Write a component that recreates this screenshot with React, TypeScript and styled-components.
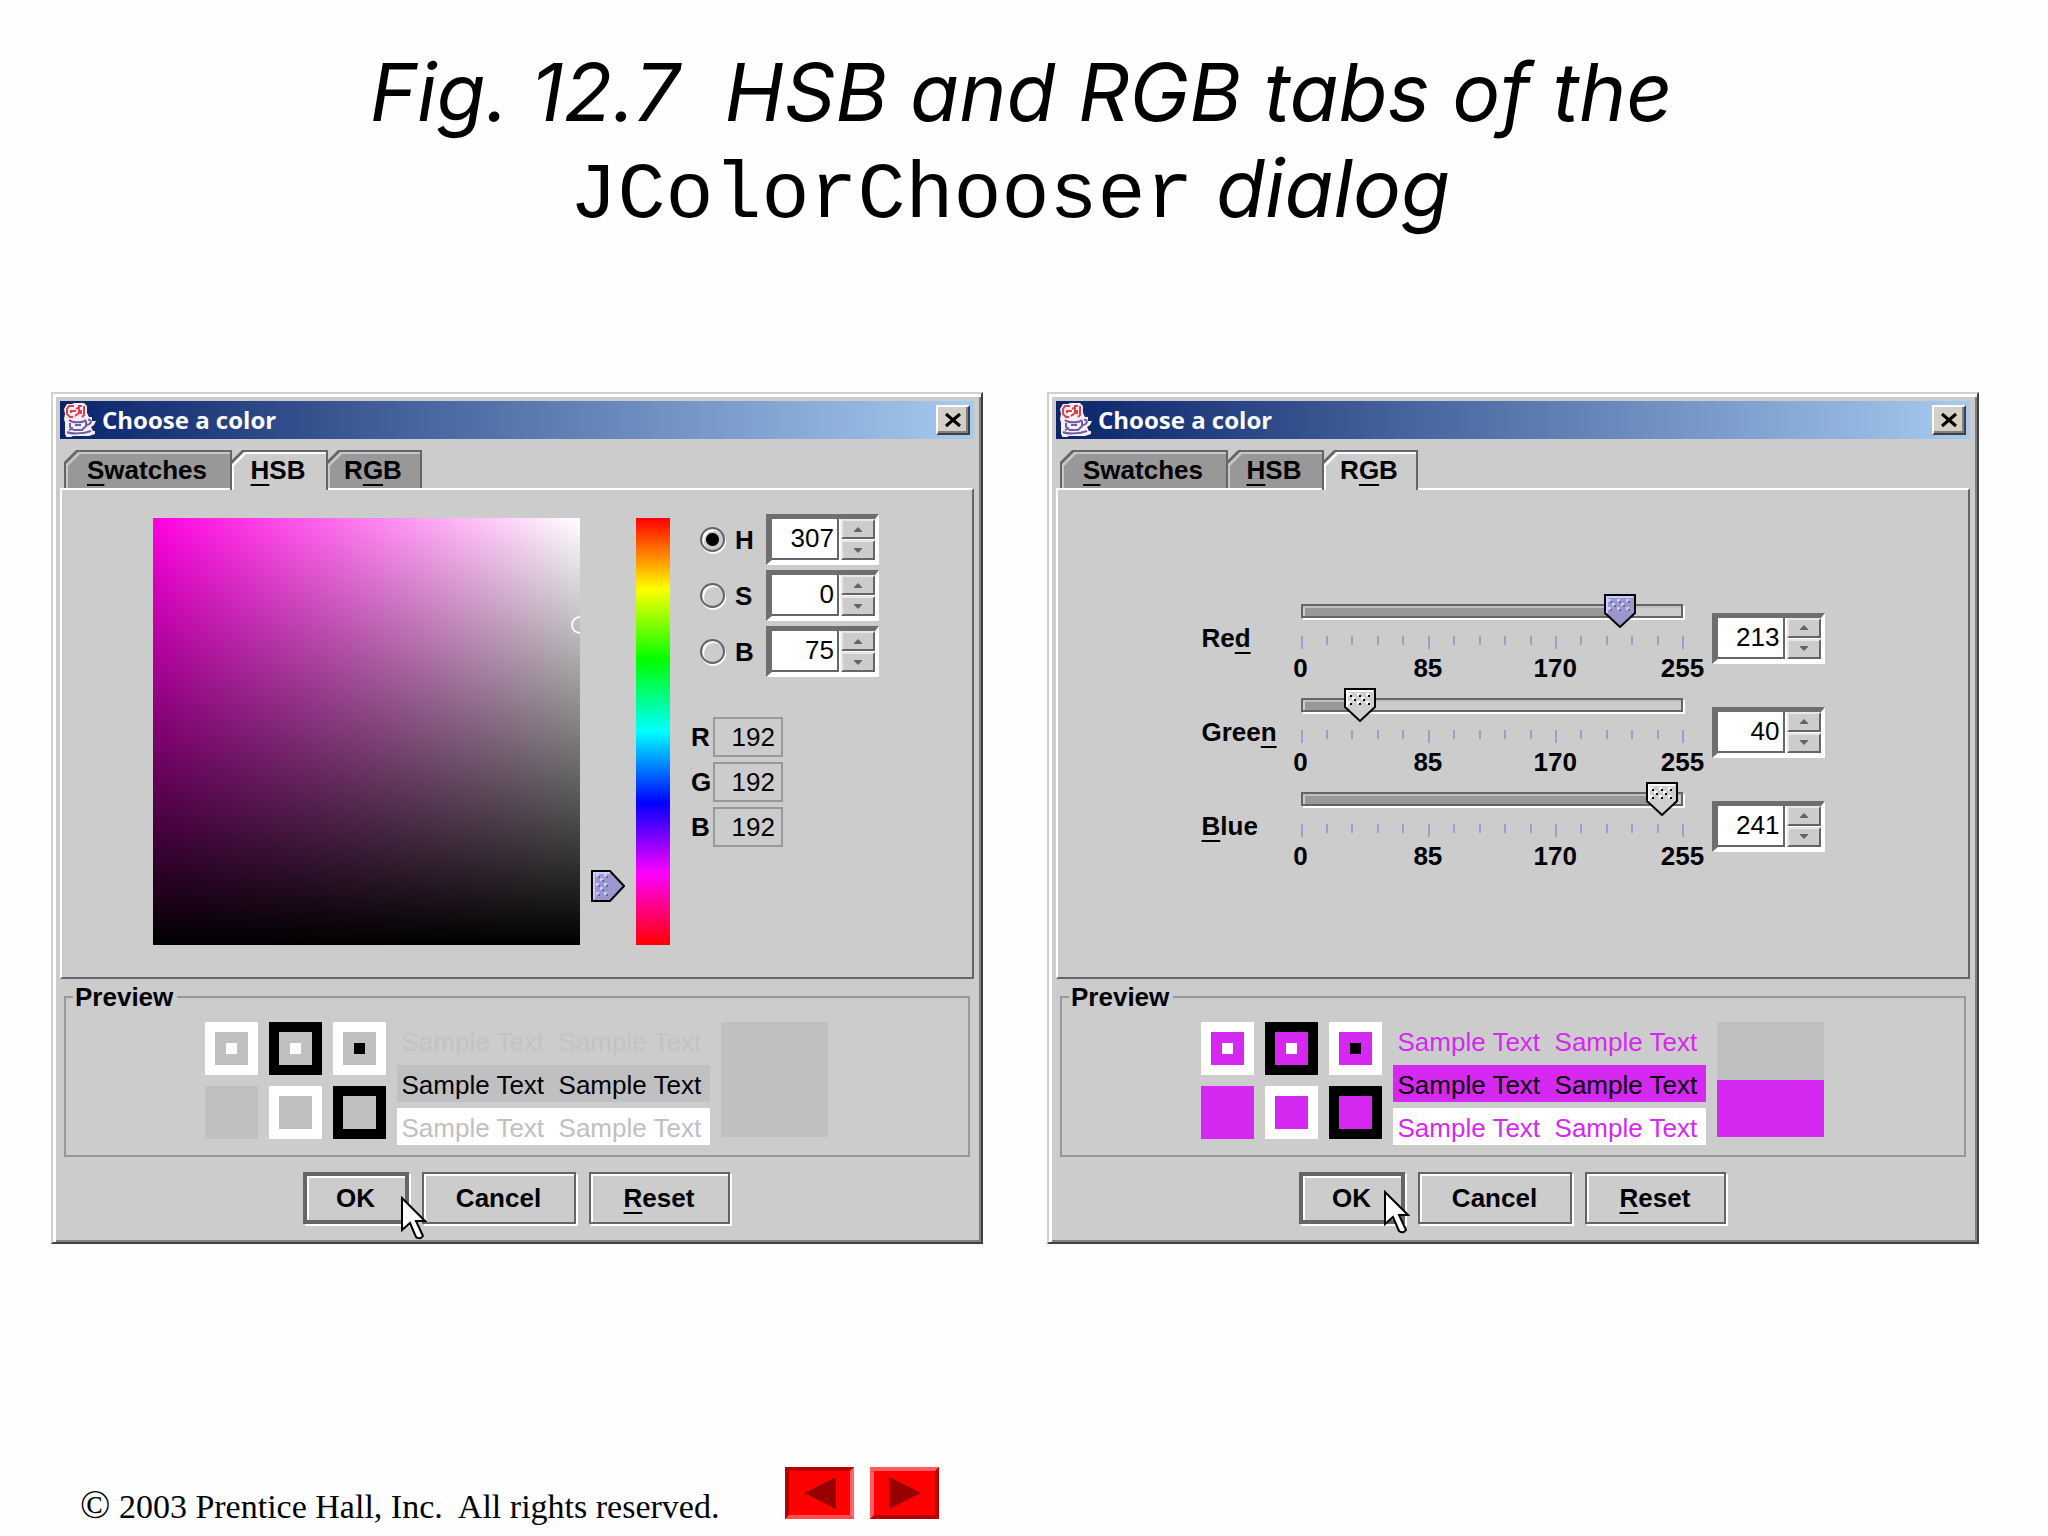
import React, { useState } from 'react';
import styled, { createGlobalStyle } from 'styled-components';

const FACE = '#cdcccd';
const SHADOW = '#666468';
const MID = '#999899';
const SANS = '"Liberation Sans", Arial, sans-serif';

const GlobalStyle = createGlobalStyle`
  *, *::before, *::after { box-sizing: border-box; }
  body { margin: 0; background: #fefefe; color: #000; font-family: ${SANS}; }
  button, input { font: inherit; color: inherit; margin: 0; padding: 0; border-radius: 0; }
`;

const Slide = styled.main`
  display: flex;
  flex-direction: column;
  min-height: 100vh;
  padding-top: 44px;
`;

const Heading = styled.h1`
  margin: 0 0 156px;
  padding-right: 6px;
  text-align: center;
  white-space: pre-line;
  font: italic 400 80px/96px Inter, "Open Sans", sans-serif;
  font-feature-settings: "cv11";
`;

const CodeName = styled.code`
  font: normal 400 80px/1 "Liberation Mono", "Courier New", monospace;
  line-height: 0;
`;

const Dialogs = styled.div`
  display: grid;
  grid-template-columns: 1fr 1fr;
  gap: 64px;
  padding: 0 69px 0 51px;
`;

const Dialog = styled.section`
  display: flex;
  flex-direction: column;
  padding: 7px 7px 16px;
  border: 2px solid;
  border-color: #d4d0c8 #404040 #404040 #d4d0c8;
  background: ${FACE};
  box-shadow: inset 3px 3px #fff, inset -2px -2px #808080;
  font-size: 26px;
  line-height: 30px;
`;

const TitleBar = styled.header`
  display: flex;
  align-items: center;
  gap: 6px;
  height: 38px;
  margin-bottom: 11px;
  padding: 0 4px;
  background: linear-gradient(90deg, #0a246a, #a6caf0);
`;

const TitleText = styled.h2`
  flex: 1;
  margin: 0;
  color: #fff;
  font: 700 24px/30px "Open Sans", "Noto Sans", sans-serif;
`;

const CloseButton = styled.button`
  display: grid;
  place-items: center;
  width: 34px;
  height: 30px;
  border: 2px solid;
  border-color: #fff #404040 #404040 #fff;
  background: #d4d0c8;
  box-shadow: inset -2px -2px #808080;
`;

const TabList = styled.div`
  display: flex;
  padding-left: 4px;
`;

const Tab = styled.button<{ $width: number; $active: boolean }>`
  --slope: polygon(0 12px, 12px 0, 100% 0, 100% 100%, 0 100%);
  position: relative;
  z-index: ${p => (p.$active ? 2 : 0)};
  isolation: isolate;
  width: ${p => p.$width}px;
  height: ${p => (p.$active ? 40 : 38)}px;
  margin-bottom: ${p => (p.$active ? -2 : 0)}px;
  padding: ${p => (p.$active ? '2px 2px 2px 0' : '2px 2px 0 0')};
  border: 0;
  background: ${SHADOW};
  clip-path: var(--slope);
  font-weight: 700;

  & + & { margin-left: -2px; }

  &::before, &::after {
    content: '';
    position: absolute;
    z-index: -1;
    inset: 2px 2px 0 2px;
    background: ${p => (p.$active ? '#fff' : '#c8c7c8')};
    clip-path: var(--slope);
  }
  &::after {
    inset: 4px 2px 0 4px;
    background: ${p => (p.$active ? FACE : MID)};
  }
`;

const Mnemonic = styled.span`
  text-decoration: underline 2px;
  text-underline-offset: 5px;
  text-decoration-skip-ink: none;
`;

const TabPanel = styled.div`
  display: flex;
  flex: 1;
  justify-content: center;
  align-items: center;
  padding: 24px 2px 27px 0;
  border: 2px solid;
  border-color: #fff ${SHADOW} ${SHADOW} #fff;
`;

const HsbLayout = styled.div`
  display: flex;
  align-items: flex-start;
`;

const ColorField = styled.div`
  position: relative;
  overflow: hidden;
  width: 427px;
  height: 427px;
  margin: 4px 11px 0 0;
  background:
    linear-gradient(to bottom, transparent, #000),
    linear-gradient(to right, #ff00e1, #fff);
`;

const FieldMarker = styled.svg`
  position: absolute;
  right: -9px;
  top: 98px;
`;

const HueSlider = styled.div`
  position: relative;
  width: 34px;
  height: 432px;
  margin: 4px 11px 0 0;
`;

const HueStrip = styled.div`
  width: 34px;
  height: 427px;
  margin: 4px 21px 0 0;
  background: linear-gradient(to bottom, #f00, #ff0, #0f0, #0ff, #00f, #f0f, #f00);
`;

const VerticalRange = styled.input`
  position: absolute;
  inset: -16px 0;
  width: 34px;
  height: 464px;
  appearance: none;
  background: transparent;
  writing-mode: vertical-lr;
  &::-webkit-slider-thumb { appearance: none; width: 34px; height: 32px; background: transparent; }
`;

const VerticalThumb = styled.svg`
  position: absolute;
  left: 0;
  transform: translateY(-50%);
  pointer-events: none;
`;

const Controls = styled.div`
  display: flex;
  flex-direction: column;
  gap: 40px;
`;

const RadioRows = styled.div`
  display: grid;
  gap: 5px;
  padding-left: 9px;
`;

const RadioRow = styled.div`
  display: grid;
  grid-template-columns: 25px 21px auto;
  align-items: center;
  column-gap: 10px;
  font-weight: 700;
`;

const Radio = styled.input`
  appearance: none;
  width: 25px;
  height: 25px;
  border: 2px solid ${SHADOW};
  border-radius: 50%;
  box-shadow: 1px 2px #fff, inset 2px 2px #fff;
  &:checked { background: radial-gradient(circle, #000 6px, transparent 7px); }
`;

const SpinnerBox = styled.div`
  display: grid;
  grid-template-columns: 67px 34px;
  column-gap: 2px;
  width: 113px;
  height: 51px;
  border: solid;
  border-width: 5px 4px 5px 6px;
  border-color: #6f6d70 #fff #fff #6f6d70;
  background: #fff;
`;

const SpinnerField = styled.input`
  width: 67px;
  height: 41px;
  padding-right: 3px;
  border: 0 solid ${SHADOW};
  border-width: 0 2px 2px 0;
  background: #fff;
  text-align: right;
  font-weight: 400;
`;

const Steps = styled.div`
  display: grid;
  grid-template-rows: 20px 20px;
  row-gap: 1px;
`;

const StepButton = styled.button`
  display: grid;
  place-items: center;
  border: 2px solid;
  border-color: #e8e7e8 ${SHADOW} ${SHADOW} #e8e7e8;
  background: ${FACE};
`;

const Readouts = styled.div`
  display: grid;
  grid-template-columns: 22px 70px;
  row-gap: 5px;
  align-items: center;
  font-weight: 700;
`;

const ReadoutField = styled.input`
  width: 70px;
  height: 40px;
  padding-right: 6px;
  border: 2px solid ${MID};
  background: transparent;
  text-align: right;
  font-weight: 400;
`;

const RgbLayout = styled.div`
  display: grid;
  gap: 5px;
  padding-left: 2px;
`;

const ChannelRow = styled.div`
  display: grid;
  grid-template-columns: 99px 382px 142px;
  align-items: center;
  font-weight: 700;
  & > :last-child { justify-self: end; }
`;

const ChannelSlider = styled.div`
  position: relative;
`;

const Groove = styled.div`
  height: 14px;
  margin: 10px 0 18px;
  padding: 2px;
  border: 2px solid ${SHADOW};
  box-shadow: 2px 2px #fff, inset 0 2px #bfbec0;
`;

const GrooveFill = styled.div`
  height: 8px;
  background: ${MID};
`;

const HorizontalRange = styled.input`
  position: absolute;
  top: 0;
  left: -16px;
  width: calc(100% + 32px);
  height: 34px;
  appearance: none;
  background: transparent;
  &::-webkit-slider-thumb { appearance: none; width: 32px; height: 34px; background: transparent; }
`;

const HorizontalThumb = styled.svg`
  position: absolute;
  top: 0;
  transform: translateX(-50%);
  pointer-events: none;
`;

const Ticks = styled.div`
  display: flex;
  justify-content: space-between;
  height: 13px;
  margin: 0 -2px 4px 0;
`;

const Tick = styled.i<{ $major: boolean }>`
  width: 2px;
  height: ${p => (p.$major ? 13 : 9)}px;
  background: #a19ccb;
`;

const ScaleLabels = styled.div`
  display: flex;
  justify-content: space-between;
  & > span { display: flex; justify-content: center; width: 0; }
`;

const PreviewBox = styled.fieldset`
  display: block;
  min-width: 0;
  margin: 3px 4px 15px;
  padding: 10px 2px 10px 0;
  border: 2px solid ${MID};
`;

const PreviewLegend = styled.legend`
  margin-left: 7px;
  padding: 0 4px 0 2px;
  font-weight: 700;
`;

const PreviewContent = styled.div`
  display: flex;
  justify-content: center;
  align-items: flex-start;
  gap: 11px;
`;

const Squares = styled.div`
  display: grid;
  grid-template-columns: repeat(3, 53px);
  gap: 11px;
`;

const Square = styled.div<{ $outer: string }>`
  height: 53px;
  padding: 10px;
  background: ${p => p.$outer};
`;

const SquareCore = styled.div<{ $color: string }>`
  height: 33px;
  padding: 11px;
  background: ${p => p.$color};
`;

const SquareDot = styled.div<{ $color: string }>`
  height: 11px;
  background: ${p => p.$color};
`;

const Samples = styled.div`
  display: grid;
  gap: 6px;
`;

const Sample = styled.p<{ $ink: string; $paper: string }>`
  width: 313px;
  height: 37px;
  margin: 0;
  padding-left: 5px;
  background: ${p => p.$paper};
  color: ${p => p.$ink};
  line-height: 40px;
  white-space: pre;
`;

const Comparison = styled.div<{ $current: string }>`
  width: 107px;
  height: 115px;
  background: linear-gradient(#c0bfc1 50%, ${p => p.$current} 50%);
`;

const ButtonBar = styled.footer`
  display: flex;
  justify-content: center;
  gap: 13px;
  padding: 0 2px 2px 0;
`;

const PushButton = styled.button<{ $width: number; $primary?: boolean }>`
  position: relative;
  z-index: ${p => (p.$primary ? 1 : 0)};
  width: ${p => p.$width}px;
  height: 52px;
  border: ${p => (p.$primary ? 4 : 2)}px solid ${SHADOW};
  background: ${FACE};
  box-shadow: 2px 2px #fff, inset 2px 2px #fff;
  font-weight: 700;
`;

const Pointer = styled.svg<{ $left: number; $top: number }>`
  position: absolute;
  z-index: 3;
  left: ${p => p.$left}px;
  top: ${p => p.$top}px;
`;

const SlideFooter = styled.footer`
  display: flex;
  align-items: flex-end;
  gap: 66px;
  margin-top: auto;
  padding: 0 80px 17px;
`;

const Copyright = styled.p`
  margin: 0;
  margin-bottom: -7px;
  white-space: pre;
  font: 34px/38px "Liberation Serif", "Times New Roman", serif;
`;

const CopyrightSign = styled.span`
  font-size: 40px;
  line-height: 0;
`;

const NavButtons = styled.nav`
  display: flex;
  gap: 16px;
`;

const NavButton = styled.button<{ $pressed?: boolean }>`
  display: grid;
  place-items: center;
  width: 69px;
  height: 52px;
  border: 4px solid;
  border-color: ${p => (p.$pressed ? '#b80000 #ff6666 #ff4d4d #b80000' : '#ff5c5c #b80000 #b80000 #ff5c5c')};
  background: #fe0000;
`;

function JavaIcon() {
  return (
    <svg width="32" height="34" viewBox="0 0 32 34" aria-hidden="true">
      <path d="M3 1h5l2-1h10l3 3v7l2 4h3v4h4l-2 4-3 2 2 4h2v3l-6 2H9l-4 2H3l-2-4V20l-1-4 1-5-1-5z" fill="#f8eef8" />
      <g fill="none" stroke="#e2404c" strokeWidth="2">
        <path d="M10 3H5L3 6v5l3 3h3M12 8H7v2M14 3h4M12 6l3-2v6l-4 3M20 3v9l-2 2M17 7v4" />
      </g>
      <g fill="none" stroke="#6a5eaa" strokeWidth="2">
        <path d="M5 17c3 3 14 3 17 0M6 20v4l4 3h8l4-4v-5M24 17c4-1 4 4-1 5M11 22h6M3 29c4 2 16 2 24-1M9 25l-4 2" />
      </g>
    </svg>
  );
}

const DOTS = [[6, 7], [15, 7], [24, 7], [10, 11], [19, 11], [6, 15], [15, 15], [24, 15]];

function ThumbShape({ active }: { active: boolean }) {
  return (
    <>
      <path d="M1 1h30v18L16 33 1 19z" fill={active ? '#9a98cc' : '#cfced0'} stroke="#000" strokeWidth="2" />
      <path d="M3 19V3h26" fill="none" stroke={active ? '#ccccff' : '#fff'} strokeWidth="2" />
      {DOTS.map(([x, y]) => (
        <g key={`${x}-${y}`}>
          <rect x={x - 2} y={y - 2} width="3" height="3" fill={active ? '#ccccff' : '#fff'} />
          <rect x={x} y={y} width="2" height="2" fill={active ? '#6866a8' : '#000'} />
        </g>
      ))}
    </>
  );
}

function Spinner({ id, label, value, max, onChange }: {
  id: string; label: string; value: number; max: number; onChange: (value: number) => void;
}) {
  const set = (next: number) => onChange(Math.max(0, Math.min(max, next || 0)));
  return (
    <SpinnerBox>
      <SpinnerField id={id} type="text" inputMode="numeric" aria-label={label} value={value}
        onChange={e => set(Number(e.target.value))} />
      <Steps>
        <StepButton type="button" aria-label={`Increase ${label}`} onClick={() => set(value + 1)}>
          <svg width="8" height="5" viewBox="0 0 8 5"><path d="M4 0l4 4v1H0V4z" fill={SHADOW} /></svg>
        </StepButton>
        <StepButton type="button" aria-label={`Decrease ${label}`} onClick={() => set(value - 1)}>
          <svg width="8" height="5" viewBox="0 0 8 5"><path d="M4 5L0 1V0h8v1z" fill={SHADOW} /></svg>
        </StepButton>
      </Steps>
    </SpinnerBox>
  );
}

function HsbPanel() {
  const [mode, setMode] = useState('H');
  const [values, setValues] = useState<Record<string, number>>({ H: 307, S: 0, B: 75 });
  const update = (key: string, value: number) => setValues(v => ({ ...v, [key]: value }));
  return (
    <HsbLayout>
      <ColorField>
        <FieldMarker width="18" height="18" viewBox="0 0 18 18" aria-hidden="true">
          <circle cx="9" cy="9" r="8" fill="none" stroke="#fff" strokeWidth="2" />
        </FieldMarker>
      </ColorField>
      <HueSlider>
        <VerticalRange type="range" aria-label="Hue" min="0" max="360" value={values.H}
          onChange={e => update('H', Number(e.target.value))} />
        <VerticalThumb width="34" height="32" viewBox="0 0 34 32" style={{ top: `${(values.H / 360) * 100}%` }} aria-hidden="true">
          <g transform="matrix(0 1 1 0 0 0)"><ThumbShape active /></g>
        </VerticalThumb>
      </HueSlider>
      <HueStrip />
      <Controls>
        <RadioRows>
          {['H', 'S', 'B'].map(key => (
            <RadioRow key={key}>
              <Radio type="radio" name="component" id={`mode-${key}`} checked={mode === key} onChange={() => setMode(key)} />
              <label htmlFor={`mode-${key}`}>{key}</label>
              <Spinner id={`hsb-${key}`} label={key} value={values[key]} max={key === 'H' ? 360 : 100}
                onChange={v => update(key, v)} />
            </RadioRow>
          ))}
        </RadioRows>
        <Readouts>
          {['R', 'G', 'B'].map(key => (
            <React.Fragment key={key}>
              <label htmlFor={`readout-${key}`}>{key}</label>
              <ReadoutField id={`readout-${key}`} type="text" readOnly value="192" />
            </React.Fragment>
          ))}
        </Readouts>
      </Controls>
    </HsbLayout>
  );
}

const CHANNELS = [
  { name: 'Red', mnemonic: 2, initial: 213 },
  { name: 'Green', mnemonic: 4, initial: 40 },
  { name: 'Blue', mnemonic: 0, initial: 241 },
];

function Marked({ text, at }: { text: string; at: number }) {
  return <>{text.slice(0, at)}<Mnemonic>{text[at]}</Mnemonic>{text.slice(at + 1)}</>;
}

function Channel({ name, mnemonic, initial }: { name: string; mnemonic: number; initial: number }) {
  const [value, setValue] = useState(initial);
  const percent = `${(value / 255) * 100}%`;
  return (
    <ChannelRow>
      <label htmlFor={`range-${name}`}><Marked text={name} at={mnemonic} /></label>
      <ChannelSlider>
        <Groove><GrooveFill style={{ width: percent }} /></Groove>
        <HorizontalRange id={`range-${name}`} type="range" min="0" max="255" value={value}
          onChange={e => setValue(Number(e.target.value))} />
        <HorizontalThumb width="32" height="34" viewBox="0 0 32 34" style={{ left: percent }} aria-hidden="true">
          <ThumbShape active={name === 'Red'} />
        </HorizontalThumb>
        <Ticks>
          {Array.from({ length: 16 }, (_, i) => <Tick key={i} $major={i % 5 === 0} />)}
        </Ticks>
        <ScaleLabels>
          {[0, 85, 170, 255].map(n => <span key={n}>{n}</span>)}
        </ScaleLabels>
      </ChannelSlider>
      <Spinner id={`rgb-${name}`} label={name} value={value} max={255} onChange={setValue} />
    </ChannelRow>
  );
}

const SAMPLE_TEXT = 'Sample Text  Sample Text';

function Preview({ color, faint }: { color: string; faint: string }) {
  return (
    <PreviewBox>
      <PreviewLegend>Preview</PreviewLegend>
      <PreviewContent>
        <Squares>
          <Square $outer="#fff"><SquareCore $color={color}><SquareDot $color="#fff" /></SquareCore></Square>
          <Square $outer="#000"><SquareCore $color={color}><SquareDot $color="#fff" /></SquareCore></Square>
          <Square $outer="#fff"><SquareCore $color={color}><SquareDot $color="#000" /></SquareCore></Square>
          <Square $outer={color} />
          <Square $outer="#fff"><SquareCore $color={color} /></Square>
          <Square $outer="#000"><SquareCore $color={color} /></Square>
        </Squares>
        <Samples>
          <Sample $ink={faint} $paper="transparent">{SAMPLE_TEXT}</Sample>
          <Sample $ink="#000" $paper={color}>{SAMPLE_TEXT}</Sample>
          <Sample $ink={color} $paper="#fff">{SAMPLE_TEXT}</Sample>
        </Samples>
        <Comparison $current={color} />
      </PreviewContent>
    </PreviewBox>
  );
}

const TABS = [
  { name: 'Swatches', mnemonic: 0, width: 168 },
  { name: 'HSB', mnemonic: 0, width: 98 },
  { name: 'RGB', mnemonic: 1, width: 96 },
];

function ColorChooser({ active, color, faint, pointer, children }: {
  active: string; color: string; faint: string; pointer: [number, number]; children: React.ReactNode;
}) {
  return (
    <Dialog role="dialog" aria-label="Choose a color">
      <TitleBar>
        <JavaIcon />
        <TitleText>Choose a color</TitleText>
        <CloseButton type="button" aria-label="Close">
          <svg width="18" height="16" viewBox="0 0 18 16"><path d="M2 2l14 12M16 2L2 14" stroke="#000" strokeWidth="3" /></svg>
        </CloseButton>
      </TitleBar>
      <TabList role="tablist">
        {TABS.map(tab => (
          <Tab key={tab.name} type="button" role="tab" aria-selected={tab.name === active}
            $width={tab.width} $active={tab.name === active}>
            <Marked text={tab.name} at={tab.mnemonic} />
          </Tab>
        ))}
      </TabList>
      <TabPanel role="tabpanel">{children}</TabPanel>
      <Preview color={color} faint={faint} />
      <ButtonBar>
        <PushButton type="button" $width={106} $primary>
          OK
          <Pointer $left={pointer[0]} $top={pointer[1]} width="26" height="45" viewBox="0 0 26 45" aria-hidden="true">
            <path d="M1 2v32l8-7 6 14q4 3 7-1l-7-15h9z" fill="#fff" stroke="#000" strokeWidth="2" />
          </Pointer>
        </PushButton>
        <PushButton type="button" $width={154}>Cancel</PushButton>
        <PushButton type="button" $width={141}><Marked text="Reset" at={0} /></PushButton>
      </ButtonBar>
    </Dialog>
  );
}

export default function App() {
  return (
    <>
      <GlobalStyle />
      <Slide>
        <Heading>
          Fig. 12.7&nbsp; HSB and RGB tabs of the{'\n'}
          <CodeName>JColorChooser</CodeName> dialog&nbsp;
        </Heading>
        <Dialogs>
          <ColorChooser active="HSB" color="#c0bfc1" faint="#c3c2c4" pointer={[94, 20]}><HsbPanel /></ColorChooser>
          <ColorChooser active="RGB" color="#d528f1" faint="#d528f1" pointer={[81, 14]}>
            <RgbLayout>
              {CHANNELS.map(channel => <Channel key={channel.name} {...channel} />)}
            </RgbLayout>
          </ColorChooser>
        </Dialogs>
        <SlideFooter>
          <Copyright><CopyrightSign>©</CopyrightSign> 2003 Prentice Hall, Inc.  All rights reserved.</Copyright>
          <NavButtons aria-label="Slides">
            <NavButton type="button" aria-label="Previous slide" $pressed>
              <svg width="32" height="32" viewBox="0 0 32 32"><path d="M0 16L32 0v32z" fill="#980000" /></svg>
            </NavButton>
            <NavButton type="button" aria-label="Next slide">
              <svg width="32" height="32" viewBox="0 0 32 32"><path d="M32 16L0 0v32z" fill="#980000" /></svg>
            </NavButton>
          </NavButtons>
        </SlideFooter>
      </Slide>
    </>
  );
}
